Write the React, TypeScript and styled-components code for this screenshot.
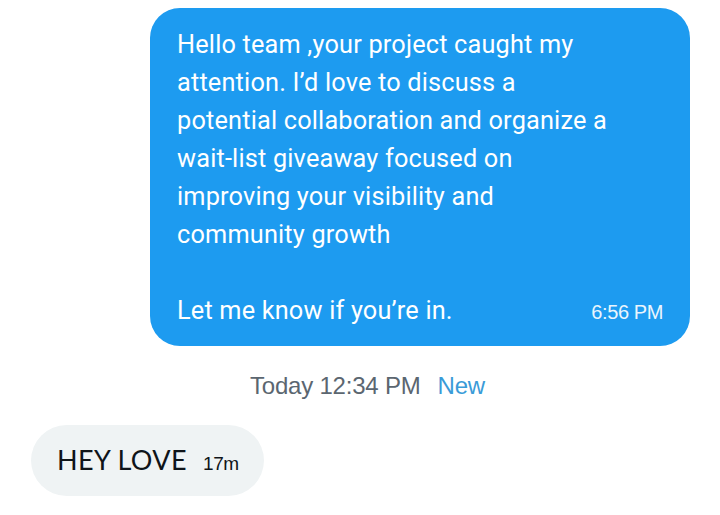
import React from "react";
import styled, { createGlobalStyle } from "styled-components";

const Global = createGlobalStyle`
  html, body { margin: 0; padding: 0; background: #ffffff; }
  body { width: 720px; height: 515px; overflow: hidden; font-family: Roboto, "Noto Sans", sans-serif; }
`;

const Thread = styled.div`
  display: flex;
  flex-direction: column;
  padding: 8px 30px 0 31px;
`;

const OutRow = styled.div`
  display: flex;
  justify-content: flex-end;
`;

const OutBubble = styled.div`
  box-sizing: border-box;
  width: 540px;
  height: 338px;
  background: #1d9bf0;
  color: #ffffff;
  border-radius: 30px;
  padding: 18px 27px 0 27px;
`;

const BodyText = styled.div`
  font-family: Roboto, "Noto Sans", sans-serif;
  font-size: 25.3px;
  line-height: 38px;
  letter-spacing: 0.18px;
  white-space: pre-line;
`;

const LastLine = styled.div`
  display: flex;
  justify-content: space-between;
  align-items: baseline;
`;

const Stamp = styled.span`
  font-family: "Liberation Sans", Arial, sans-serif;
  font-size: 20px;
  letter-spacing: -0.4px;
  color: #eaf5fd;
`;

const DayRow = styled.div`
  display: flex;
  justify-content: flex-end;
  gap: 17px;
  padding: 22px 205px 0 0;
  font-family: "Liberation Sans", Arial, sans-serif;
  font-size: 24px;
  letter-spacing: -0.2px;
  line-height: 36px;
`;

const DayLabel = styled.span`
  color: #5b6670;
`;

const NewLabel = styled.span`
  color: #3a9bd8;
`;

const InRow = styled.div`
  display: flex;
  padding-top: 21px;
`;

const InBubble = styled.div`
  box-sizing: border-box;
  height: 71px;
  display: flex;
  align-items: baseline;
  gap: 16px;
  background: #eff3f4;
  border-radius: 36px;
  padding: 17px 25px 0 26px;
  color: #0f1419;
`;

const InText = styled.span`
  font-family: Lato, "Open Sans", sans-serif;
  font-size: 27px;
  letter-spacing: 0.4px;
  line-height: 36px;
`;

const InTime = styled.span`
  font-family: "Liberation Sans", Arial, sans-serif;
  font-size: 19px;
  letter-spacing: -0.4px;
  color: #0f1419;
`;

export default function App() {
  return (
    <>
      <Global />
      <Thread>
        <OutRow>
          <OutBubble>
            <BodyText>
              {"Hello team ,your project caught my\nattention. I’d love to discuss a\npotential collaboration and organize a\nwait-list giveaway focused on\nimproving your visibility and\ncommunity growth\n\u00a0"}
            </BodyText>
            <LastLine>
              <BodyText>Let me know if you’re in.</BodyText>
              <Stamp>6:56 PM</Stamp>
            </LastLine>
          </OutBubble>
        </OutRow>
        <DayRow>
          <DayLabel>Today 12:34 PM</DayLabel>
          <NewLabel>New</NewLabel>
        </DayRow>
        <InRow>
          <InBubble>
            <InText>HEY LOVE</InText>
            <InTime>17m</InTime>
          </InBubble>
        </InRow>
      </Thread>
    </>
  );
}
